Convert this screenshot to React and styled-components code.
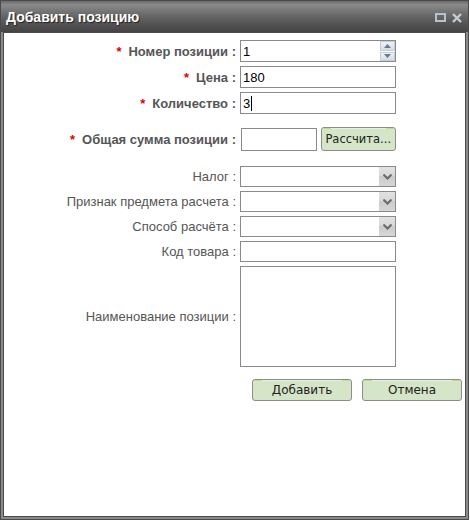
import React from "react";
import styled, { createGlobalStyle } from "styled-components";

const Global = createGlobalStyle`
  html, body { margin: 0; padding: 0; background: #fff; }
  body { font-family: "Liberation Sans", Arial, sans-serif; }
  * { box-sizing: border-box; }
`;

const Window = styled.div`
  width: 469px;
  height: 520px;
  border: 1px solid #4a4a4a;
  background: #8a8a8a;
  padding: 0 2px 2px 2px;
  display: flex;
  flex-direction: column;
`;

const TitleBar = styled.div`
  height: 31px;
  margin: 0 -2px;
  padding: 0 6px 0 5px;
  display: flex;
  align-items: center;
  justify-content: space-between;
  background: linear-gradient(to bottom, #6a6a6a 0%, #8a8a8a 12%, #6e6e6e 40%, #525252 75%, #444 100%);
`;

const Title = styled.div`
  color: #fff;
  font: bold 14px "Liberation Sans", Arial, sans-serif;
  text-shadow: 1px 1px 1px #222;
  margin-top: 1px;
`;

const TitleTools = styled.div`
  display: flex;
  align-items: center;
  gap: 6px;
  margin-top: 2px;
`;

const Body = styled.div`
  flex: 1;
  background: #fff;
  border: 1px solid #4a4a4a;
  padding: 7px 2px 0 0;
  display: flex;
  flex-direction: column;
`;

const Row = styled.div`
  display: grid;
  grid-template-columns: 232px 156px;
  column-gap: 4px;
  align-items: center;
  margin-top: ${(p) => p.$mt ?? 4}px;
`;

const Label = styled.div`
  text-align: right;
  font-size: 13px;
  font-weight: ${(p) => (p.$req ? "bold" : "normal")};
  color: #555;
  white-space: nowrap;
`;

const Star = styled.span`
  color: #e00000;
  font-weight: bold;
  margin-right: 7px;
`;

const Box = styled.div`
  height: ${(p) => p.$h || 22}px;
  width: ${(p) => p.$w || 156}px;
  margin-left: ${(p) => p.$ml || 0}px;
  border: 1px solid #8a8a8a;
  background: #fff;
  display: flex;
  align-items: center;
  font-size: 13px;
  color: #000;
  padding-left: 2px;
  position: relative;
`;

const Value = styled.span`
  flex: 1;
  display: flex;
  align-items: center;
`;

const Caret = styled.span`
  display: inline-block;
  width: 1px;
  height: 15px;
  background: #000;
  margin-left: 1px;
`;

const Spinner = styled.div`
  width: 15px;
  height: 100%;
  display: flex;
  flex-direction: column;
  gap: 1px;
`;

const SpinBtn = styled.div`
  flex: 1;
  background: linear-gradient(to bottom, #eef2f6, #d6dde6);
  border: 1px solid #c4ccd6;
  display: flex;
  align-items: center;
  justify-content: center;
`;

const DropArrow = styled.div`
  width: 16px;
  height: 19px;
  background: linear-gradient(to bottom, #e2e2e2 0%, #d8d8d8 45%, #cbcbcb 50%, #d6d6d6 100%);
  display: flex;
  align-items: center;
  justify-content: center;
`;

const FieldGroup = styled.div`
  display: flex;
  align-items: center;
  gap: 4px;
`;

const Button = styled.button`
  width: ${(p) => p.$w || 100}px;
  height: ${(p) => p.$h || 22}px;
  border: 1px solid #8c8c8c;
  border-radius: 3px;
  background: #d5e5c8;
  box-shadow: inset 0 1px 0 #e6f0dc;
  font: ${(p) => p.$fs || 12}px "DejaVu Sans", Verdana, sans-serif;
  color: #222;
  padding: 0;
  white-space: nowrap;
  overflow: hidden;
  cursor: pointer;
  position: relative;
  &::before, &::after {
    content: "";
    position: absolute;
    top: 0;
    width: 8px;
    height: 1px;
    background: #c2dc8c;
  }
  &::before { left: 1px; }
  &::after { right: 1px; }
`;

const Actions = styled.div`
  display: flex;
  justify-content: flex-end;
  gap: 10px;
  margin-top: 12px;
  padding-right: 1px;
`;

const Up = () => (
  <svg width="7" height="4" viewBox="0 0 7 4"><path d="M0 4 L3.5 0 L7 4Z" fill="#6b7a8a" /></svg>
);
const Down = () => (
  <svg width="7" height="4" viewBox="0 0 7 4"><path d="M0 0 L3.5 4 L7 0Z" fill="#6b7a8a" /></svg>
);
const Chevron = () => (
  <svg width="9" height="6" viewBox="0 0 9 6"><path d="M0.5 0.5 L4.5 4.5 L8.5 0.5" stroke="#6a6a6a" strokeWidth="2" fill="none" /></svg>
);

const Select = () => (
  <Box $h={21}>
    <Value />
    <DropArrow><Chevron /></DropArrow>
  </Box>
);

export default function App() {
  return (
    <>
      <Global />
      <Window>
        <TitleBar>
          <Title>Добавить позицию</Title>
          <TitleTools>
            <svg width="11" height="9" viewBox="0 0 11 9">
              <rect x="1" y="1" width="9" height="7" fill="none" stroke="#b7c2cc" strokeWidth="2" />
            </svg>
            <svg width="10" height="10" viewBox="0 0 10 10">
              <path d="M1 1 L9 9 M9 1 L1 9" stroke="#c4ccd4" strokeWidth="2.4" />
            </svg>
          </TitleTools>
        </TitleBar>
        <Body>
          <Row $mt={0}>
            <Label $req><Star>*</Star>Номер позиции :</Label>
            <Box>
              <Value>1</Value>
              <Spinner>
                <SpinBtn><Up /></SpinBtn>
                <SpinBtn><Down /></SpinBtn>
              </Spinner>
            </Box>
          </Row>
          <Row>
            <Label $req><Star>*</Star>Цена :</Label>
            <Box><Value>180</Value></Box>
          </Row>
          <Row>
            <Label $req><Star>*</Star>Количество :</Label>
            <Box><Value>3<Caret /></Value></Box>
          </Row>
          <Row $mt={13}>
            <Label $req><Star>*</Star>Общая сумма позиции :</Label>
            <FieldGroup>
              <Box $w={76} $h={23} $ml={1} />
              <Button $w={76} $h={24} $fs={11.5}>Рассчита...</Button>
            </FieldGroup>
          </Row>
          <Row $mt={15}>
            <Label>Налог :</Label>
            <Select />
          </Row>
          <Row>
            <Label>Признак предмета расчета :</Label>
            <Select />
          </Row>
          <Row>
            <Label>Способ расчёта :</Label>
            <Select />
          </Row>
          <Row>
            <Label>Код товара :</Label>
            <Box $h={21} />
          </Row>
          <Row>
            <Label>Наименование позиции :</Label>
            <Box $h={101} />
          </Row>
          <Actions>
            <Button>Добавить</Button>
            <Button>Отмена</Button>
          </Actions>
        </Body>
      </Window>
    </>
  );
}
